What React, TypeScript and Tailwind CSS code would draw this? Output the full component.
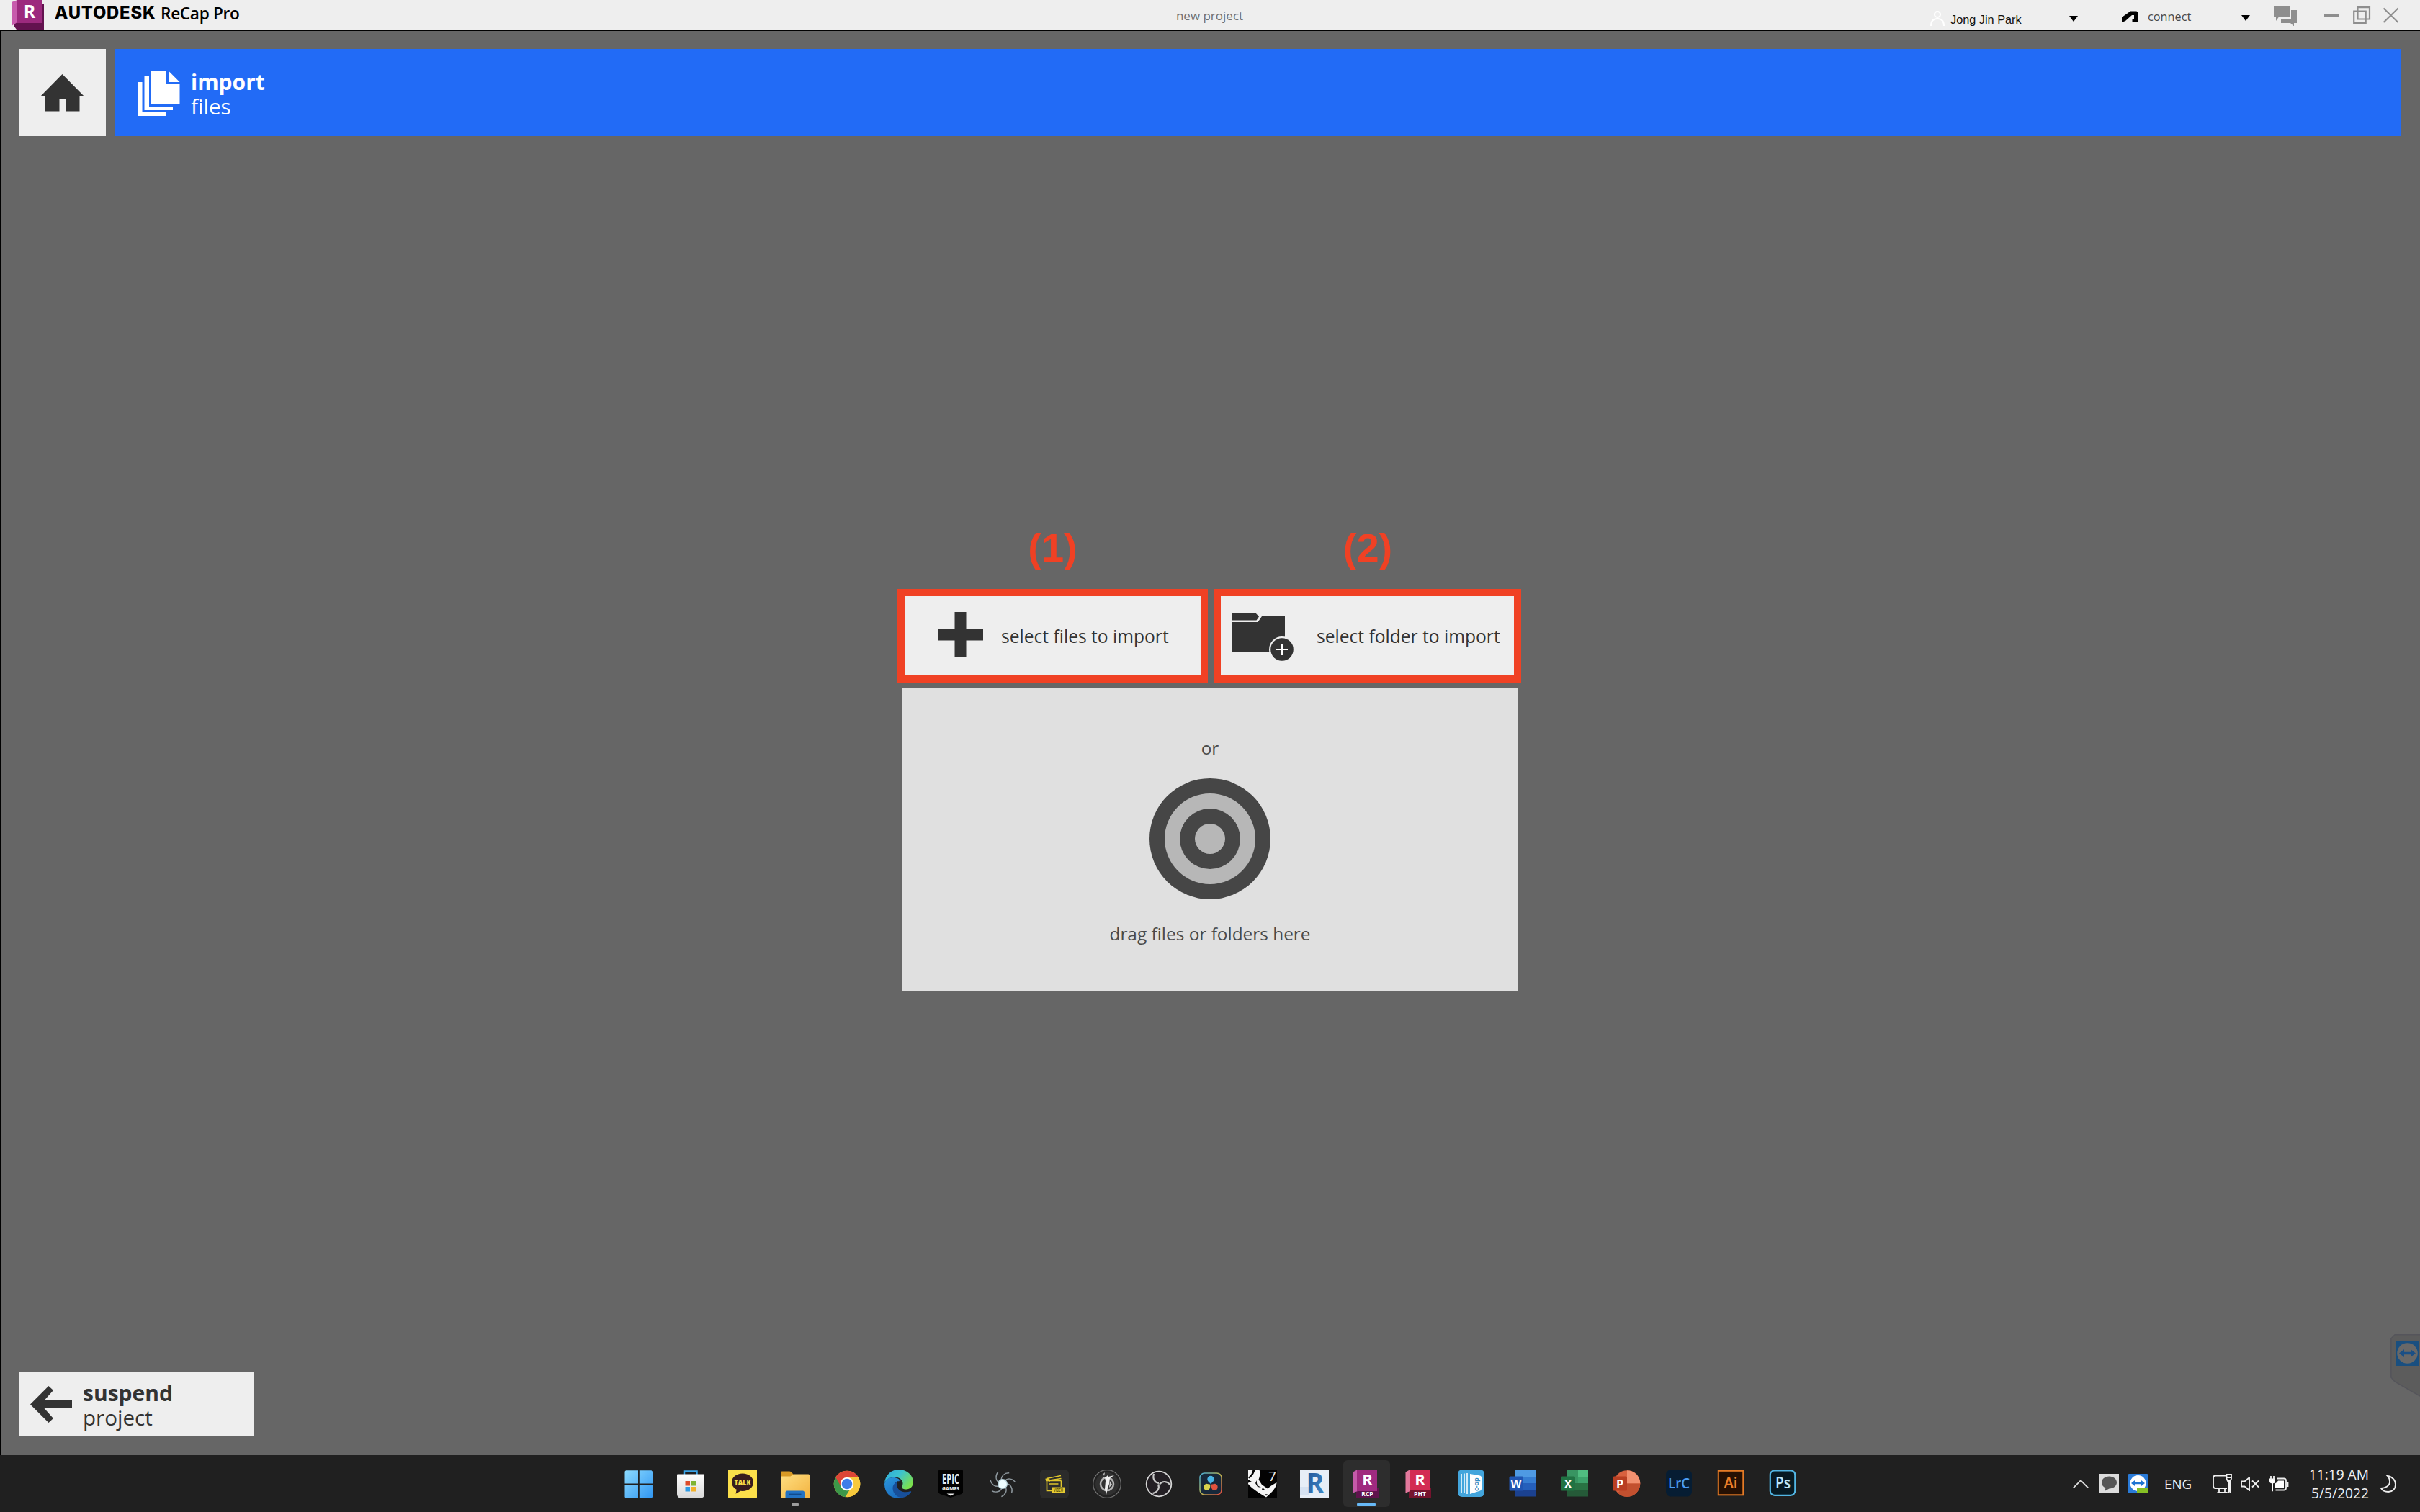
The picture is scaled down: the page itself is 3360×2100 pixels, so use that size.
import type { ReactNode } from "react";

interface TaskbarApp {
  name: string;
  icon: ReactNode;
  state?: "open" | "active";
}

function Icon({ children }: { children: ReactNode }) {
  return (
    <svg viewBox="0 0 40 40" className="w-[40px] h-[40px] overflow-visible font-['Open_Sans',sans-serif]">
      {children}
    </svg>
  );
}

function Caret({ className }: { className: string }) {
  return (
    <svg viewBox="0 0 12 8" className={`w-[12px] h-[8px] shrink-0 ${className}`}>
      <path d="M0 0h12L6 8z" fill="#000" />
    </svg>
  );
}

const apps: TaskbarApp[] = [
  {
    name: "Start",
    icon: (
      <Icon>
        <defs>
          <linearGradient id="win" x1="0" y1="0" x2="40" y2="40" gradientUnits="userSpaceOnUse">
            <stop offset="0" stopColor="#8ddcff" />
            <stop offset="1" stopColor="#2f95f2" />
          </linearGradient>
        </defs>
        <path fill="url(#win)" d="M2 1.3h17v18.2H.5V2.8zM20.8 1.3H37.5l1.5 1.5v16.7H20.8zM.5 21.3H19V39.7H2L.5 38.2zM20.8 21.3H39v16.9l-1.5 1.5H20.8z" />
      </Icon>
    ),
  },
  {
    name: "Store",
    icon: (
      <Icon>
        <defs>
          <linearGradient id="bag" x1="0" y1="0" x2="0" y2="1">
            <stop offset="0" stopColor="#ffffff" />
            <stop offset="1" stopColor="#d9d9d9" />
          </linearGradient>
        </defs>
        <path d="M11 8V2.5h17.5V8" fill="none" stroke="#3ba4e8" strokeWidth="2.5" />
        <path d="M1 7.5q0-1 1-1h36q1 0 1 1V34q0 5.500-5.500 5.500h-27Q1 39.500 1 34z" fill="url(#bag)" />
        <path d="M12.500 16H19v6.500h-6.500z" fill="#dd4d2b" />
        <path d="M20.500 16H27v6.500h-6.500z" fill="#7fb434" />
        <path d="M12.500 24H19v6.500h-6.500z" fill="#2f9be4" />
        <path d="M20.500 24H27v6.500h-6.500z" fill="#f2b12b" />
      </Icon>
    ),
  },
  {
    name: "KakaoTalk",
    icon: (
      <Icon>
        <rect width="40" height="39.5" rx="1" fill="#fbdf4a" />
        <path d="M20 5.500c8.500 0 15 5.200 15 12.200S28.500 30 20 30l-2.800-.2-6.700 4 1.200-6C7.600 25.500 5 22 5 17.700 5 10.700 11.500 5.500 20 5.500z" fill="#371d1e" />
        <text x="20" y="22" textAnchor="middle" fontSize="10.500" fontWeight="800" fill="#fbdf4a" textLength="23" lengthAdjust="spacingAndGlyphs">TALK</text>
      </Icon>
    ),
  },
  {
    name: "Explorer",
    state: "open",
    icon: (
      <Icon>
        <defs>
          <linearGradient id="folder" x1="0" y1="0" x2="1" y2="1">
            <stop offset="0" stopColor="#ffdf82" />
            <stop offset="1" stopColor="#f3b340" />
          </linearGradient>
        </defs>
        <path d="M0 4q0-1.500 1.500-1.500H12q1.500 0 2.500 1L18 7v6H0z" fill="#d99a25" />
        <path d="M0 9.500h13.500L18 6.500h20.500q1.500 0 1.500 1.500v31.500H0z" fill="url(#folder)" />
        <path d="M6.500 39.500V32q0-2.500 2.500-2.500h21.500q2.500 0 2.500 2.500v7.500z" fill="#2272c3" />
        <path d="M11 34.500h17.500" stroke="#114a8b" strokeWidth="1.800" />
      </Icon>
    ),
  },
  {
    name: "Chrome",
    icon: (
      <Icon>
        <circle cx="20" cy="20" r="18.300" fill="#f7c93c" />
        <path d="M20 20 4.200 10.800A18.300 18.300 0 0 0 17.500 38.200l8-13z" fill="#3c9749" />
        <path d="M20 20v-9.200h15.900A18.300 18.300 0 0 0 4.200 10.800L12 24.500z" fill="#dc4637" />
        <path d="M35.900 10.800H20l8.500 13.500-8 14A18.300 18.300 0 0 0 35.900 10.800z" fill="#f7c93c" />
        <circle cx="20" cy="20" r="9.200" fill="#fff" />
        <circle cx="20" cy="20" r="7.300" fill="#3f7de8" />
      </Icon>
    ),
  },
  {
    name: "Edge",
    icon: (
      <Icon>
        <defs>
          <linearGradient id="edgeTop" x1="0" y1="0" x2="1" y2="0.600">
            <stop offset="0" stopColor="#2ea8dc" />
            <stop offset="0.500" stopColor="#3cc3cf" />
            <stop offset="1" stopColor="#7be04f" />
          </linearGradient>
          <linearGradient id="edgeBottom" x1="0" y1="0" x2="0.600" y2="1">
            <stop offset="0" stopColor="#2a96dc" />
            <stop offset="1" stopColor="#1b6cc0" />
          </linearGradient>
        </defs>
        <path d="M0 19C1 8 9 0 20 0c12 0 20 8.500 20 17.500 0 6.500-5 10-9.500 10-4 0-7-1.500-6.500-3.500.5-1.500 1.500-2 1.500-5C25 14 20 10 14 10.500 6 11 1 15 0 19z" fill="url(#edgeTop)" />
        <path d="M0 20C1 14 6 11 12 11c5 0 9 2.500 10.500 5-5-1-8.500 2-8.500 7 0 8 6 14 14 14-14 7-28-1-28-17z" fill="url(#edgeBottom)" />
        <path d="M22.500 16c-6 0-11 4-11 10 0 7 6 13.500 14 13 5-1 9-4 11.500-7.500.6-1-.3-1.500-1-1.200-9 3.200-19-1-19-9.300 0-2.500 1.500-4.500 5.500-5z" fill="#174f9a" />
      </Icon>
    ),
  },
  {
    name: "Epic Games",
    icon: (
      <Icon>
        <path d="M3 2q0-2 2-2h30q2 0 2 2v30l-2 2-15 5L5 34l-2-2z" fill="#020202" />
        <text x="20" y="20" textAnchor="middle" fontSize="20" fontWeight="700" fill="#eee" textLength="24" lengthAdjust="spacingAndGlyphs">EPIC</text>
        <text x="20" y="29" textAnchor="middle" fontSize="7" fontWeight="800" fill="#ddd" textLength="24" lengthAdjust="spacingAndGlyphs">GAMES</text>
        <path d="M14.500 33.500h11L20 36.500z" fill="#eee" />
      </Icon>
    ),
  },
  {
    name: "Capture",
    icon: (
      <Icon>
        <g fill="none" stroke="#8d979d" strokeWidth="1.400">
          {[15, 66, 118, 169, 221, 272, 324].map((angle) => (
            <path key={angle} d="M17 15C15 10 19 4 25 3" transform={`rotate(${angle} 20 20)`} />
          ))}
        </g>
        <circle cx="20" cy="20" r="7" fill="#b9d2da" />
        <path d="M15 17l5-3 5 3 1 5-5 4-6-2z" fill="#eefcff" />
      </Icon>
    ),
  },
  {
    name: "Video Editor",
    icon: (
      <Icon>
        <rect width="40" height="40" rx="6" fill="#2b2b2b" />
        <g fill="none" stroke="#dfc52d" strokeWidth="1.700">
          <path d="M9.500 15.500V29.500h8M29.500 24v-8.500M9 12.500l20-4M9 16l-.8-3.500M13 20.500v-.5h12.500M9.500 15.500l20-3M9.500 15.500h20" />
          <path d="M10 13l4 3" strokeWidth="3" />
        </g>
        <rect x="16.500" y="24.500" width="18" height="8" rx="1" fill="#e9cb31" />
        <text x="25.500" y="31" textAnchor="middle" fontSize="6.500" fontWeight="700" fill="#6b5c0c" textLength="13" lengthAdjust="spacingAndGlyphs">VIDEO</text>
      </Icon>
    ),
  },
  {
    name: "Emblem",
    icon: (
      <Icon>
        <circle cx="20" cy="20" r="19.300" fill="#222" stroke="#777" strokeWidth="1.200" />
        <circle cx="20" cy="20" r="16" fill="#303030" />
        <circle cx="20" cy="20" r="9" fill="none" stroke="#b5b5b5" strokeWidth="2.500" />
        <path d="M12 12l7-2 2-2 1 2 8-2-6 4-1 8-2 6-2 9-2-8 1-11-1-5z" fill="#f0f0f0" />
        <path d="M17 4l-2 2 1 3zM24 16l-1 9 4-4z" fill="#ccc" />
      </Icon>
    ),
  },
  {
    name: "OBS",
    icon: (
      <Icon>
        <circle cx="20" cy="20" r="17.300" fill="#231f24" stroke="#d6d6d6" strokeWidth="1.800" />
        <g fill="none" stroke="#c9c9c9" strokeWidth="2.200">
          {[0, 120, 240].map((angle) => (
            <path key={angle} d="M20 19c-6-1-9-6-7-13" transform={`rotate(${angle} 20 20)`} />
          ))}
        </g>
      </Icon>
    ),
  },
  {
    name: "DaVinci Resolve",
    icon: (
      <Icon>
        <defs>
          <linearGradient id="resolve" x1="0" y1="0" x2="1" y2="1">
            <stop offset="0" stopColor="#42a9d8" />
            <stop offset="0.500" stopColor="#b8b552" />
            <stop offset="1" stopColor="#e0473f" />
          </linearGradient>
        </defs>
        <rect x="5" y="5" width="30" height="30" rx="6.500" fill="#17283a" stroke="url(#resolve)" strokeWidth="1.500" />
        <path d="M20 20c-3-3-4.700-4.500-4.700-6.500a4.700 4.700 0 0 1 9.400 0c0 2-1.700 3.500-4.700 6.500z" fill="#49b5e5" />
        <path d="M19.300 20.800c.2 4.500-.7 8.200-4.800 8.200a4.700 4.700 0 0 1-1-9.100c1.500-.3 3.500.9 5.800.9z" fill="#d9d24b" />
        <path d="M20.700 20.800c-.2 4.500.7 8.200 4.800 8.200a4.700 4.700 0 0 0 1-9.100c-1.500-.3-3.500.9-5.800.9z" fill="#e0533e" />
      </Icon>
    ),
  },
  {
    name: "Rhino",
    icon: (
      <Icon>
        <rect width="40" height="39.500" fill="#030303" />
        <path d="M0 0h15.500c1.500 5 1 9-1 14l4.500 7 8 5.500 5-4L39.500 18c0 5-4 11-9 15.500L25 38.500l-5-3C11 30 4 25 0 20v-1.500l5-1.500-5-3z" fill="#f5f5f5" />
        <path d="M6.500 0h3C9 4.500 6 9 1.500 12.500L0 11c4-3 6-7 6.500-11z" fill="#030303" />
        <path d="M12 15l-2 4 3 5 5 1-5-3-1-3zM20 25l4 4-5-1zM24 34l3 .5-2 2z" fill="#111" />
        <text x="28" y="15.500" fontSize="19" fill="#eee">7</text>
      </Icon>
    ),
  },
  {
    name: "Revit",
    icon: (
      <Icon>
        <defs>
          <linearGradient id="revit" x1="0" y1="0" x2="1" y2="1">
            <stop offset="0" stopColor="#214f93" />
            <stop offset="1" stopColor="#3f8fcd" />
          </linearGradient>
        </defs>
        <rect width="40" height="39.500" fill="#e7eef7" />
        <path d="M0 24h12v11H0z" fill="#d6e2f2" />
        <text x="8.500" y="33" fontSize="39" fontWeight="700" fill="url(#revit)" textLength="25" lengthAdjust="spacingAndGlyphs">R</text>
      </Icon>
    ),
  },
  {
    name: "ReCap",
    state: "active",
    icon: (
      <Icon>
        <path d="M6 26h31v14H6z" fill="#5f134d" />
        <path d="M1.500 3.500 8 0v30l-6.500 2.500z" fill="#c45aa9" />
        <path d="M7 0h28v30H7z" fill="#9f2a80" />
        <text x="21.500" y="22" textAnchor="middle" fontSize="22" fontWeight="700" fill="#fff">R</text>
        <text x="21.500" y="37" textAnchor="middle" fontSize="8.500" fontWeight="700" fill="#fff">RCP</text>
      </Icon>
    ),
  },
  {
    name: "ReCap Photo",
    icon: (
      <Icon>
        <path d="M6 26h31v14H6z" fill="#75142e" />
        <path d="M1.500 3.500 8 0v30l-6.500 2.500z" fill="#e2789b" />
        <path d="M7 0h28v28H7z" fill="#d32b53" />
        <text x="21.500" y="22" textAnchor="middle" fontSize="22" fontWeight="700" fill="#fff">R</text>
        <text x="21.500" y="37" textAnchor="middle" fontSize="8.500" fontWeight="700" fill="#fff">PHT</text>
      </Icon>
    ),
  },
  {
    name: "Books",
    icon: (
      <Icon>
        <rect x="2" width="37" height="38" rx="6" fill="#43a5dc" />
        <path d="M7 6v26M11 5.500v27.500M15 5v29" stroke="#e9f6fd" strokeWidth="1.700" />
        <path d="M19 6l14 2.500q2 .5 2 2.500v16q0 2-2 2.500L19 34z" fill="#fff" />
        <text x="-30" y="31" transform="rotate(-90)" fontSize="9" fontWeight="700" fill="#328ec5">c-op</text>
      </Icon>
    ),
  },
  {
    name: "Word",
    icon: (
      <Icon>
        <path d="M10 1h29v9.500H10z" fill="#4f9ae3" />
        <path d="M10 10h29v9.500H10z" fill="#367dd2" />
        <path d="M10 19h29v9.500H10z" fill="#255fbb" />
        <path d="M10 28h29v9.500H10z" fill="#1b418f" />
        <rect x="1.500" y="9.500" width="19.500" height="20" rx="1.500" fill="#2055b2" />
        <text x="11" y="25.500" textAnchor="middle" fontSize="15.500" fontWeight="700" fill="#fff">W</text>
      </Icon>
    ),
  },
  {
    name: "Excel",
    icon: (
      <Icon>
        <path d="M10 1h15v18H10z" fill="#389562" />
        <path d="M25 1h14v9.500H25z" fill="#50bd80" />
        <path d="M25 10h14v9.500H25z" fill="#3da36b" />
        <path d="M10 19h29v9.500H10z" fill="#297343" />
        <path d="M10 28h29v9.500H10z" fill="#255a38" />
        <rect x="1.500" y="9.500" width="19.500" height="20" rx="1.500" fill="#207343" />
        <text x="11" y="25.500" textAnchor="middle" fontSize="16" fontWeight="700" fill="#fff">X</text>
      </Icon>
    ),
  },
  {
    name: "PowerPoint",
    icon: (
      <Icon>
        <circle cx="21" cy="19.500" r="18.300" fill="#d8613f" />
        <path d="M21 1.200a18.300 18.300 0 0 1 18.300 18.300H21z" fill="#f1906f" />
        <path d="M39.300 19.500A18.300 18.300 0 0 1 8 32.500l13-13z" fill="#c2502f" />
        <rect x="1.500" y="9.500" width="19.500" height="20" rx="1.500" fill="#b93f22" />
        <text x="11" y="25.500" textAnchor="middle" fontSize="16" fontWeight="700" fill="#fff">P</text>
      </Icon>
    ),
  },
  {
    name: "Lightroom Classic",
    icon: (
      <Icon>
        <rect x="2" y=".5" width="36" height="37" rx="6.500" fill="#061d33" />
        <text x="20" y="25.500" textAnchor="middle" fontSize="20" fontWeight="600" fill="#4a9cf3" textLength="30" lengthAdjust="spacingAndGlyphs">LrC</text>
      </Icon>
    ),
  },
  {
    name: "Illustrator",
    icon: (
      <Icon>
        <rect x="2.800" y="1.800" width="34.500" height="33.500" fill="#251003" stroke="#e57b26" strokeWidth="2" />
        <text x="20" y="25.500" textAnchor="middle" fontSize="21" fontWeight="600" fill="#ec8029" textLength="19" lengthAdjust="spacingAndGlyphs">Ai</text>
      </Icon>
    ),
  },
  {
    name: "Photoshop",
    icon: (
      <Icon>
        <rect x="2.800" y="1.300" width="34.500" height="34.500" rx="6" fill="#071a23" stroke="#52b6e4" strokeWidth="2.200" />
        <text x="20.500" y="25.500" textAnchor="middle" fontSize="21" fontWeight="600" fill="#bfe6f8" textLength="21" lengthAdjust="spacingAndGlyphs">Ps</text>
      </Icon>
    ),
  },
];

function TitleBar() {
  return (
    <header className="flex items-start h-[42px] bg-[#eeeeee] shrink-0">
      <div className="flex items-start w-[1560px] text-black">
        <svg viewBox="0 0 46 42" className="w-[46px] h-[42px] ml-[16px] shrink-0">
          <path d="M4 5h41v36H7l-3-4z" fill="#63124f" />
          <path d="M0 3 8 0v31l-8 5z" fill="#c75bac" />
          <path d="M7 0h35v32H7z" fill="#9c2a7e" />
          <text x="25" y="24.500" textAnchor="middle" fontSize="25" fontWeight="700" fill="#fff" className="font-['Open_Sans',sans-serif]">R</text>
        </svg>
        <span className="ml-[14px] w-[147px] font-['Inter',sans-serif] font-extrabold text-[23.8px] tracking-[0.8px] leading-[36px] whitespace-nowrap">AUTODESK</span>
        <span className="font-['Open_Sans',sans-serif] font-semibold text-[22.6px] tracking-[-0.3px] leading-[37px] whitespace-nowrap">ReCap Pro</span>
      </div>
      <div className="w-[239px] text-center text-[17px] leading-[43px] text-[#707070]">new project</div>
      <div className="flex items-start flex-1">
        <svg viewBox="0 0 20 21" className="w-[20px] h-[21px] ml-[881px] mt-[15px] shrink-0" fill="none" stroke="#fff" strokeWidth="2">
          <circle cx="10" cy="5" r="4" />
          <path d="M1 21c0-7 3-10 9-10s9 3 9 10" />
        </svg>
        <span className="ml-[8px] mt-[6px] w-[165px] font-['Liberation_Sans',sans-serif] text-[16.3px] leading-[42px] text-[#111]">Jong Jin Park</span>
        <Caret className="mt-[22px]" />
        <svg viewBox="0 0 22 16" className="w-[22px] h-[16px] ml-[61px] mt-[15px] shrink-0">
          <path d="M0 16V9L12 .5h8.500L22 2v13h-7.500v-3.500H17V6h-3L5 14z" fill="#000" />
        </svg>
        <span className="ml-[14px] mt-[2px] w-[130px] text-[16.3px] leading-[42px] text-[#4a4a4a]">connect</span>
        <Caret className="mt-[21px]" />
        <svg viewBox="0 0 32 28" className="w-[32px] h-[28px] ml-[33px] mt-[8px] shrink-0" fill="#8e8e8e">
          <path d="M0 0h22.500v15.500H7L3 21v-5.500H0z" />
          <path d="M24 6h8v18h-4v4.500L23 24H10v-5.500h14z" />
        </svg>
        <svg viewBox="0 0 104 24" className="w-[104px] h-[24px] ml-[38px] mt-[9px] shrink-0" fill="none" stroke="#8e8e8e">
          <path d="M0 12.800h21" strokeWidth="3.800" />
          <path d="M41.200 6.500h16.500V23H41.200zM46.500 1.200H63v16.300H46.500z" strokeWidth="2.200" />
          <path d="M82.500 2.500l20 19.500M102.500 2.500l-20 19.500" strokeWidth="2" />
        </svg>
      </div>
    </header>
  );
}

function ImportPanel() {
  return (
    <section className="mt-[544px] ml-[1220px] w-[866px] text-[24.6px] text-[#333333]">
      <div className="flex font-['Liberation_Sans',sans-serif] font-bold text-[56px] leading-[56px] text-[#f04124]">
        <span className="w-[431px] text-center">(1)</span>
        <span className="ml-[9px] w-[426px] text-center">(2)</span>
      </div>
      <div className="flex gap-[8px] mt-[29px]">
        <button className="flex items-center w-[431px] h-[131px] pl-[46px] bg-[#eeeeee] border-[10px] border-b-[11px] border-[#f04124] whitespace-nowrap">
          <svg viewBox="0 0 63 63" className="w-[63px] h-[63px] mb-[4px] shrink-0">
            <path d="M23.500 0h16v23.500H63v16H39.500V63h-16V39.500H0v-16h23.500z" fill="#333" />
          </svg>
          <span className="ml-[25px] mt-[3px]">select files to import</span>
        </button>
        <button className="flex items-center w-[427px] h-[131px] pl-[16px] bg-[#eeeeee] border-[10px] border-b-[11px] border-[#f04124] whitespace-nowrap">
          <svg viewBox="0 0 86 70" className="w-[86px] h-[70px] mt-[3px] shrink-0">
            <path d="M0 1h32l5 5.500-3.500 5H0z" fill="#333" />
            <path d="M0 14h35.500L41 6h32v49.500H0z" fill="#333" />
            <circle cx="69" cy="52" r="18" fill="#eee" />
            <circle cx="69" cy="52" r="15.800" fill="#333" />
            <path d="M69 44v16M61 52h16" stroke="#fff" strokeWidth="2.200" />
          </svg>
          <span className="ml-[31px] mt-[3px]">select folder to import</span>
        </button>
      </div>
      <div className="flex flex-col items-center mt-[6px] ml-[7px] w-[854px] h-[421px] pt-[72px] bg-[#e0e0e0] text-[24.4px] leading-[24px] text-[#4a4a4a]">
        <span>or</span>
        <svg viewBox="0 0 168 168" className="w-[168px] h-[168px] mt-[30px]">
          <circle cx="84" cy="84" r="84" fill="#464646" />
          <circle cx="84" cy="84" r="63" fill="#b7b7b7" />
          <circle cx="84" cy="84" r="42" fill="#464646" />
          <circle cx="84" cy="84" r="21" fill="#b7b7b7" />
        </svg>
        <span className="mt-[36px]">drag files or folders here</span>
      </div>
    </section>
  );
}

function Taskbar() {
  return (
    <footer className="flex items-center h-[79px] bg-[#202020] text-white shrink-0">
      <div className="flex ml-[851px] w-[1660px]">
        {apps.map((app) => (
          <div key={app.name} className="relative flex flex-1 items-center justify-center h-[79px] pt-[1px]">
            {app.state === "active" && <div className="absolute left-[4px] top-[7px] w-[65px] h-[65px] rounded-[6px] bg-[#2d2d2d]" />}
            <div className="relative">{app.icon}</div>
            {app.state === "active" && <div className="absolute left-[23px] top-[66px] w-[26px] h-[5px] rounded-full bg-[#67b9f7]" />}
            {app.state === "open" && <div className="absolute left-[31px] top-[66px] w-[10px] h-[5px] rounded-full bg-[#9d9d9d]" />}
          </div>
        ))}
      </div>
      <div className="flex items-center ml-[367px] text-[#f0f0f0]">
        <svg viewBox="0 0 22 12" className="w-[22px] h-[12px]" fill="none" stroke="#ddd" strokeWidth="1.800">
          <path d="M.8 11.500 11 1.200l10.200 10.300" />
        </svg>
        <svg viewBox="0 0 27 27" className="w-[27px] h-[27px] ml-[15px]">
          <rect width="27" height="27" fill="#dcdcdc" />
          <path d="M13.500 3.500c6 0 10.500 3.700 10.500 8.500s-4.500 8.500-10.500 8.500L7 24l1.500-4.500C5 18 3 15.500 3 12c0-4.800 4.500-8.500 10.500-8.500z" fill="#555" />
        </svg>
        <svg viewBox="0 0 27 27" className="w-[27px] h-[27px] ml-[13px]">
          <rect width="27" height="27" rx="1" fill="#2a7bd8" />
          <circle cx="13.500" cy="13" r="11" fill="#fff" />
          <path d="M4 13l5-4v2.800h9V9l5 4-5 4v-2.800H9V17z" fill="#1f74d2" />
          <rect x="12" y="19" width="15" height="8" fill="#86c025" />
        </svg>
        <span className="ml-[23px] w-[67px] text-[18.7px] leading-[24px]">ENG</span>
        <svg viewBox="0 0 27 27" className="w-[27px] h-[27px]" fill="none" stroke="#eee" strokeWidth="1.800">
          <path d="M18 2.500H4Q1 2.500 1 5.500V17q0 3 3 3h16M9 20.500v5M17 20.500v5M6.500 26H20" />
          <path d="M19.500 1h6.500v6l-1.500 3H21L19.500 7zM19.500 5H26M22.800 10v14q0 2-2.500 2M24.500 10v16" />
        </svg>
        <svg viewBox="0 0 27 20" className="w-[27px] h-[20px] ml-[12px]" fill="none" stroke="#eee" strokeWidth="1.900">
          <path d="M1 6.500h4.500L12 1.200v17.600L5.500 13.500H1zM16 5.500l9 9M25 5.500l-9 9" />
        </svg>
        <svg viewBox="0 0 27 22" className="w-[27px] h-[22px] ml-[13px]" fill="none" stroke="#eee" strokeWidth="1.800">
          <path d="M10 3.500h10q3 0 3 3v10q0 3-3 3H8.500" />
          <path d="M23.500 9h2v5h-2" />
          <path d="M12 6.500h8V16H7v-5q3-1 5-4.500z" fill="#fff" stroke="none" />
          <path d="M0 3.500h8V7Q8 10 5 10.300v11H3v-11Q0 10 0 7z" fill="#fff" stroke="none" />
          <path d="M2 0v5M6 0v5" />
        </svg>
        <div className="ml-[21px] mt-[1px] w-[90px] text-right text-[19.2px] leading-[26.5px]">
          <div>11:19 AM</div>
          <div>5/5/2022</div>
        </div>
        <svg viewBox="0 0 22 24" className="w-[22px] h-[24px] ml-[16px] mt-[1px]" fill="none" stroke="#eee" strokeWidth="1.800">
          <path d="M10 1c7 1 11 6 11 12 0 6-4.500 10-10 10-4.500 0-8-1.500-10-5 5 0 12-3 12-9 0-4-1-6-3-8z" />
        </svg>
      </div>
    </footer>
  );
}

export default function App() {
  return (
    <div className="relative flex flex-col w-[3360px] h-[2100px] overflow-hidden bg-[#666666] font-['Open_Sans','Noto_Sans',sans-serif]">
      <TitleBar />

      <main className="flex flex-col flex-1 border-t border-l border-black pt-[25px] pl-[25px]">
        <div className="flex gap-[13px]">
          <button className="flex items-center justify-center w-[121px] h-[121px] bg-[#eeeeee]">
            <svg viewBox="0 0 61 52" className="w-[61px] h-[52px]">
              <path d="M30.500 0 61 31h-6.500v20.500H35V35h-8.500v16.500H7V31H0z" fill="#333" />
            </svg>
          </button>
          <div className="flex items-center w-[3174px] h-[121px] pl-[31px] bg-[#226bf6] text-white">
            <svg viewBox="0 0 59 63" className="w-[59px] h-[63px] mt-[1px]" fill="#fff">
              <path d="M19 0h21v18.500h18.500V47H19z" />
              <path d="M43 .5 58.500 16H43z" />
              <path d="M9.500 8h6.500v42h33v5H9.500z" />
              <path d="M0 16h6.500v42H40v5H0z" />
            </svg>
            <div className="ml-[15px] mt-[4px] leading-[34px]">
              <div className="text-[30px] font-bold">import</div>
              <div className="text-[29.6px]">files</div>
            </div>
          </div>
        </div>

        <ImportPanel />

        <button className="flex items-center w-[326px] h-[89px] mt-[530px] pl-[16px] bg-[#eeeeee] text-[#333333] text-left">
          <svg viewBox="0 0 58 52" className="w-[58px] h-[52px]">
            <path d="M0 25.500 25.500 0l6.500 6L19.500 20H58v11H19.500L32 45l-6.500 6z" fill="#333" />
          </svg>
          <div className="ml-[15px] mt-[3px] leading-[34px]">
            <div className="text-[30px] font-bold">suspend</div>
            <div className="text-[29.6px]">project</div>
          </div>
        </button>
      </main>

      <Taskbar />

      {/* Docked remote session tab */}
      <svg viewBox="0 0 41 88" className="absolute right-0 top-[1853px] w-[41px] h-[88px]">
        <path d="M41 .8H6L.8 6v54L6 66l35 20" fill="#5c5c5c" stroke="#55555b" strokeWidth="1.500" />
        <rect x="7" y="9" width="33" height="35" fill="#194f80" />
        <circle cx="23.500" cy="26.500" r="14.300" fill="#686868" />
        <path d="M12 26.500l7-5.500v3.800h9V21l7 5.500-7 5.500v-3.800h-9V32z" fill="#1b4f85" />
      </svg>
    </div>
  );
}
